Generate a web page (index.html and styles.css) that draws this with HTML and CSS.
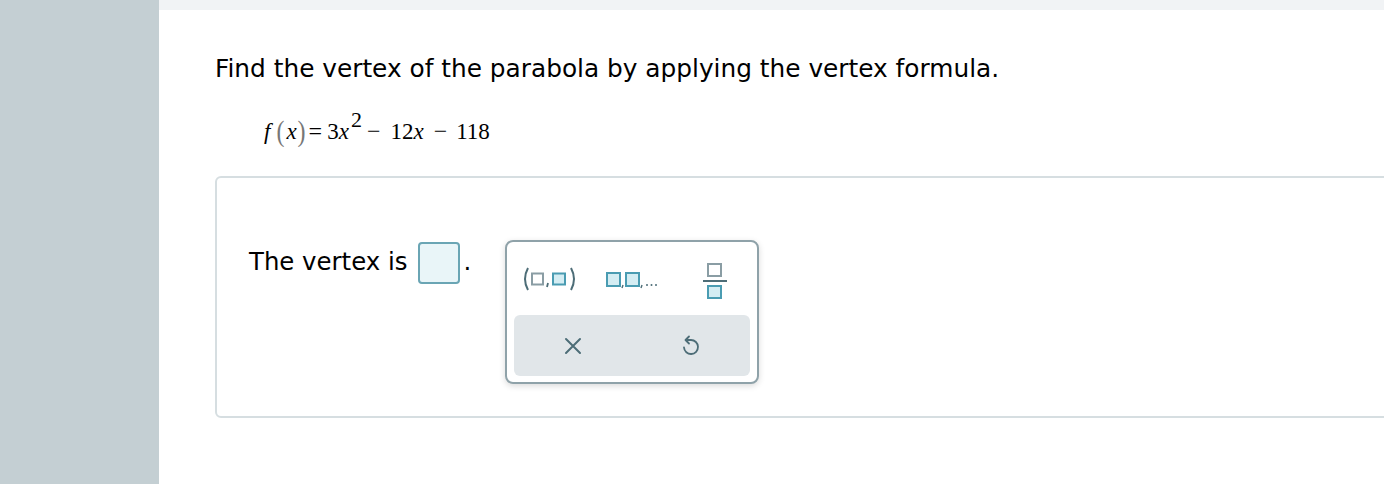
FILE: index.html
```html
<!DOCTYPE html>
<html lang="en">
<head>
  <meta charset="UTF-8" />
  <title>Vertex of a parabola</title>
  <link rel="stylesheet" href="styles.css">
</head>
<body>
  <div class="page">
    <div class="sidebar"></div>
    <div class="main">
      <div class="topbar"></div>
      <div class="content">
        <p class="question">Find the vertex of the parabola by applying the vertex formula.</p>
        <div class="formula">
          <i class="fn">f</i><span class="paren open">(</span><i class="arg">x</i><span class="paren">)</span><span class="op eq">=</span>3<i>x</i><sup>2</sup><span class="op op1">−</span>12<i>x</i><span class="op">−</span>118
        </div>

        <div class="answer">
          <div class="answer-row">
            <span class="label">The vertex is</span>
            <span class="input-box"></span>
            <span class="dot">.</span>

            <div class="palette">
              <div class="palette-top">
                <button class="tool tool-pair" title="Ordered pair">
                  <svg width="58" height="26" viewBox="0 0 58 26">
                    <path d="M6 2 Q0 13 6 24" fill="none" stroke="#4d6d77" stroke-width="2"/>
                    <rect x="10" y="7.5" width="11" height="11" fill="#fff" stroke="#8a9da4" stroke-width="2"/>
                    <path d="M26 17 L25 21" stroke="#4d6d77" stroke-width="1.8"/>
                    <rect x="31" y="7.5" width="12" height="11" fill="#d4edf3" stroke="#4a9cb2" stroke-width="2"/>
                    <path d="M49 2 Q55 13 49 24" fill="none" stroke="#4d6d77" stroke-width="2"/>
                  </svg>
                </button>
                <button class="tool tool-list" title="List">
                  <svg width="56" height="26" viewBox="0 0 56 26">
                    <rect x="1" y="7" width="13" height="13" fill="#d4edf3" stroke="#4a9cb2" stroke-width="2"/>
                    <path d="M17 19 L16 22" stroke="#4d6d77" stroke-width="1.4"/>
                    <rect x="20" y="7" width="13" height="13" fill="#d4edf3" stroke="#4a9cb2" stroke-width="2"/>
                    <path d="M36 19 L35 22" stroke="#4d6d77" stroke-width="1.4"/>
                    <circle cx="41" cy="19" r="1" fill="#4d6d77"/>
                    <circle cx="45.5" cy="19" r="1" fill="#4d6d77"/>
                    <circle cx="50" cy="19" r="1" fill="#4d6d77"/>
                  </svg>
                </button>
                <button class="tool tool-frac" title="Fraction">
                  <svg width="26" height="38" viewBox="0 0 26 38">
                    <rect x="6" y="2" width="13" height="12" fill="#fff" stroke="#8a9da4" stroke-width="2"/>
                    <path d="M1 19 L25 19" stroke="#4d6d77" stroke-width="2"/>
                    <rect x="6" y="24" width="13" height="12" fill="#d4edf3" stroke="#4a9cb2" stroke-width="2"/>
                  </svg>
                </button>
              </div>
              <div class="palette-bottom">
                <button class="tool" title="Clear">
                  <svg width="18" height="18" viewBox="0 0 18 18">
                    <path d="M2 2 L16 16 M16 2 L2 16" stroke="#4d6d77" stroke-width="2" stroke-linecap="round"/>
                  </svg>
                </button>
                <button class="tool" title="Undo">
                  <svg width="20" height="22" viewBox="0 0 20 22">
                    <path d="M8 1.5 L4.5 5 L8 8.5" fill="none" stroke="#4d6d77" stroke-width="1.8" stroke-linecap="round" stroke-linejoin="round"/>
                    <path d="M5 5 L10 5 A7 7 0 1 1 3 12.5" fill="none" stroke="#4d6d77" stroke-width="1.8" stroke-linecap="round"/>
                  </svg>
                </button>
              </div>
            </div>
          </div>
        </div>
      </div>
    </div>
  </div>
</body>
</html>
```

FILE: styles.css
```css
body {
  margin: 0;
  font-family: "DejaVu Sans", Verdana, sans-serif;
  color: #000;
  background: #fff;
}

.page {
  display: flex;
  height: 484px;
  overflow: hidden;
}

.sidebar {
  width: 159px;
  flex-shrink: 0;
  background: #c4cfd3;
}

.main {
  flex: 1;
  overflow: hidden;
}

.topbar {
  height: 10px;
  background: #f1f3f5;
}

.content {
  padding-left: 56px;
}

.question {
  margin: 43px 0 0;
  font-size: 24.8px;
  line-height: 32px;
}

.formula {
  margin: 30px 0 0 49px;
  font-family: "Liberation Serif", "Times New Roman", serif;
  font-size: 23px;
  line-height: 32px;
}

.formula i {
  font-style: italic;
}

.formula .fn {
  margin-right: 6px;
}

.formula .arg {
  margin-right: 1px;
}

.formula .paren {
  display: inline-block;
  color: #777;
  font-size: 24px;
  transform: scaleY(1.2);
}

.formula .open {
  margin-right: 2px;
}

.formula .op {
  font-size: 24px;
  line-height: 0;
  margin: 0 9px 0 10px;
}

.formula .eq {
  margin: 0 5px 0 3px;
}

.formula .op1 {
  margin: 0 10px 0 5px;
}

.formula sup {
  font-size: 22px;
  line-height: 0;
  vertical-align: 12px;
  margin-left: 2px;
}

.answer {
  margin-top: 28px;
  width: 1300px;
  height: 238px;
  border: 2px solid #d6dee1;
  border-radius: 6px;
}

.answer-row {
  display: flex;
  align-items: flex-start;
  padding: 62px 0 0 32px;
}

.label {
  font-size: 24.4px;
  line-height: 42px;
  margin-top: 1px;
}

.input-box {
  width: 38px;
  height: 38px;
  margin: 2px 0 0 11px;
  border: 2px solid #6aa5b4;
  border-radius: 4px;
  background: #e9f5f8;
}

.dot {
  font-size: 24.4px;
  line-height: 42px;
  margin: 1px 0 0 3px;
}

.palette {
  margin: 0 0 0 34px;
  width: 236px;
  padding: 7px 7px 6px;
  border: 2px solid #8fa2a9;
  border-radius: 8px;
  background: #fff;
  box-shadow: 0 2px 6px rgba(0, 0, 0, 0.15);
}

.tool {
  border: none;
  background: none;
  padding: 0;
  display: flex;
  align-items: center;
  justify-content: center;
  cursor: pointer;
}

.palette-top {
  display: flex;
  align-items: center;
  height: 66px;
  padding-bottom: 2px;
  box-sizing: border-box;
}

.tool-pair {
  margin: 0 0 4px 8px;
}

.tool-list {
  margin: 0 0 4px 26px;
}

.tool-frac {
  margin-left: 40px;
}

.palette-bottom {
  display: flex;
  justify-content: space-around;
  align-items: center;
  height: 61px;
  background: #e1e6e9;
  border-radius: 6px;
}
```
